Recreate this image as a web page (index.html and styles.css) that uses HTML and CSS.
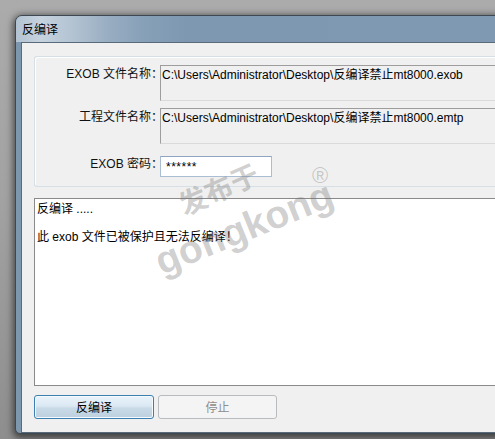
FILE: index.html
```html
<!DOCTYPE html>
<html lang="zh">
<head>
<meta charset="utf-8">
<title>反编译</title>
<link rel="stylesheet" href="styles.css">
</head>
<body>
<div class="window">
  <div class="titlebar">反编译</div>
  <div class="client">
    <div class="group">
      <div class="label top">EXOB 文件名称：</div>
      <div class="path">C:\Users\Administrator\Desktop\反编译禁止mt8000.exob</div>
      <div class="label top">工程文件名称：</div>
      <div class="path">C:\Users\Administrator\Desktop\反编译禁止mt8000.emtp</div>
      <div class="label pwd-label">EXOB 密码：</div>
      <div class="pwd">******</div>
    </div>
    <div class="output">
      <div class="line">反编译 .....</div>
      <div class="line">&nbsp;</div>
      <div class="line">此 exob 文件已被保护且无法反编译！</div>
    </div>
    <div class="buttons">
      <div class="btn primary">反编译</div>
      <div class="btn disabled">停止</div>
    </div>
  </div>
</div>
<div class="wm wm-cn">发布于</div>
<div class="wm wm-en">gongkong</div>
<div class="wm wm-r">®</div>
</body>
</html>
```

FILE: styles.css
```css
html, body {
  margin: 0;
  padding: 0;
}
body {
  width: 495px;
  height: 439px;
  overflow: hidden;
  position: relative;
  background: linear-gradient(to bottom, #ababab 0, #a2a2a2 200px, #8e8e8e 439px);
  font-family: "Liberation Sans", "Noto Sans CJK SC", sans-serif;
  font-size: 12px;
  color: #000;
}
.window {
  margin: 15px 0 0 15px;
  width: 540px;
  height: 417px;
  border: 1px solid #3e4852;
  border-radius: 7px 7px 0 5px;
  background: #7d97ae;
  box-shadow: 0 2px 7px 2px rgba(0,0,0,0.55);
  display: flex;
  flex-direction: column;
}
.titlebar {
  height: 26px;
  line-height: 26px;
  padding-left: 6px;
  font-family: "Noto Sans CJK SC", sans-serif;
  font-size: 12px;
  color: #000;
  border-radius: 6px 6px 0 0;
  background: linear-gradient(to right, #b3c3d2 0, #c6d2de 25px, #b4c4d3 55px, #97acc1 95px, #86a0b8 130px, #7e98b1 170px, #7f99b2 100%);
}
.client {
  margin: 0 5px 0 5px;
  border: 1px solid #596a7a;
  background: #f0f0f0;
  padding: 13px 0 7px 12px;
  height: 383px;
  display: flex;
  flex-direction: column;
}
.group {
  border: 1px solid #d5dfe5;
  border-right: none;
  border-radius: 3px 0 0 3px;
  box-shadow: inset 1px 1px 0 #fff;
  padding: 8px 0 0 0;
  box-sizing: border-box;
  height: 131px;
  display: grid;
  grid-template-columns: 122px 1fr;
  grid-template-rows: 36px 36px 21px;
  column-gap: 3px;
  row-gap: 7px;
  align-content: start;
}
.label {
  text-align: right;
  line-height: 14px;
  align-self: center;
  white-space: nowrap;
  color: #111;
  margin-right: -6px;
}
.label.top {
  align-self: start;
  padding-top: 2px;
}
.label.pwd-label {
  margin-top: 5px;
}
.path {
  border-top: 1px solid #9d9d9d;
  border-left: 1px solid #9d9d9d;
  border-bottom: 1px solid #dadada;
  background: #f0f0f0;
  padding: 2px 0 0 1px;
  line-height: 14px;
  white-space: nowrap;
  overflow: hidden;
  box-sizing: border-box;
}
.pwd {
  margin-top: 5px;
  width: 112px;
  height: 21px;
  box-sizing: border-box;
  border: 1px solid #abbdd3;
  border-top-color: #8ea5c2;
  background: #fff;
  padding: 3px 0 0 5px;
  line-height: 14px;
  letter-spacing: 0.5px;
  font-size: 12px;
}
.output {
  margin-top: 11px;
  height: 188px;
  box-sizing: border-box;
  border: 1px solid #8a8a8a;
  border-right: none;
  background: #fff;
  padding: 3px 0 0 2px;
}
.line {
  line-height: 14px;
  white-space: nowrap;
}
.buttons {
  margin-top: 9px;
  display: flex;
  gap: 4px;
}
.btn {
  height: 24px;
  box-sizing: border-box;
  border-radius: 3px;
  text-align: center;
  line-height: 22px;
  font-family: "Noto Sans CJK SC", sans-serif;
  font-size: 12px;
}
.btn.primary {
  width: 120px;
  border: 1px solid #3c7fb1;
  background: linear-gradient(to bottom, #eaf3fa 0, #dbe9f4 45%, #c9dae7 55%, #bdd0df 100%);
  box-shadow: inset 0 0 0 1px #f4fafe;
  color: #000;
}
.btn.disabled {
  width: 119px;
  border: 1px solid #b8bcbf;
  background: #f4f4f4;
  color: #8d8d8d;
}
.wm {
  position: absolute;
  font-family: "Liberation Sans", "Noto Sans CJK SC", sans-serif;
  font-weight: bold;
  color: rgba(110,110,110,0.32);
  white-space: nowrap;
  transform-origin: center;
}
.wm-cn {
  left: 176px;
  top: 172px;
  font-family: "Noto Sans CJK SC", sans-serif;
  font-size: 28px;
  line-height: 32px;
  transform: rotate(-24deg);
}
.wm-en {
  left: 150px;
  top: 208px;
  font-size: 39px;
  line-height: 40px;
  transform: rotate(-22deg);
}
.wm-r {
  left: 312px;
  top: 164px;
  font-size: 22px;
  font-weight: normal;
  line-height: 24px;
}
```
